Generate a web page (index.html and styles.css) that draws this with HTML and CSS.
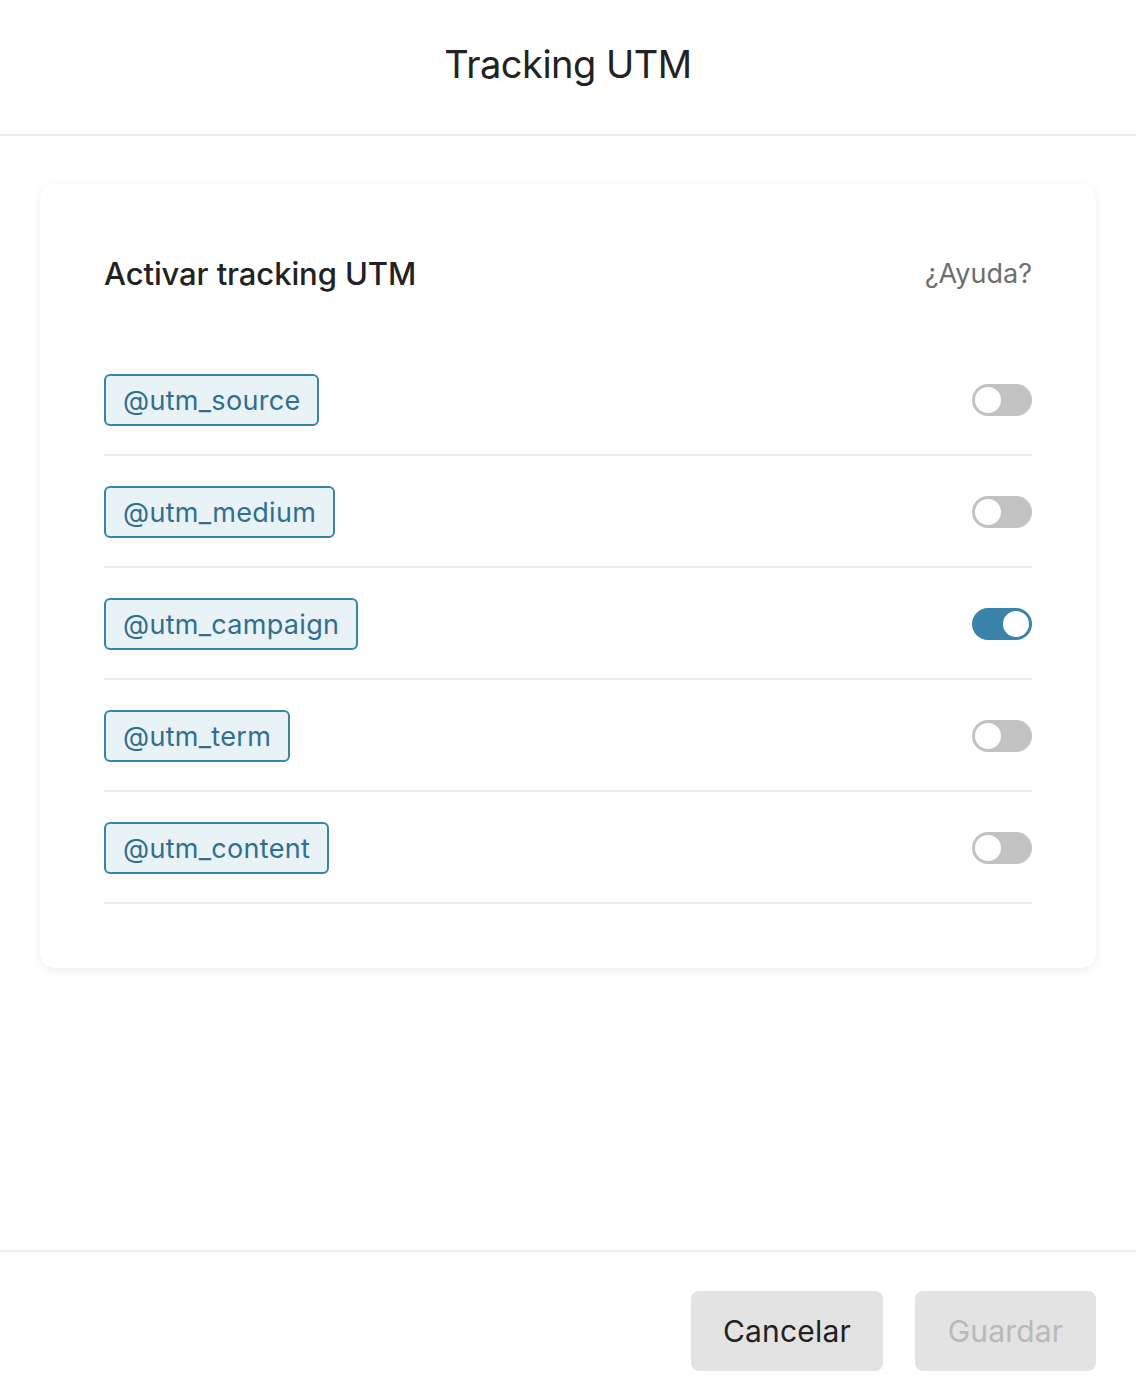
FILE: index.html
```html
<!DOCTYPE html>
<html lang="es">
<head>
<meta charset="utf-8">
<title>Tracking UTM</title>
<link rel="stylesheet" href="styles.css">
</head>
<body>
<div class="page">
  <header class="top">
    <h1 class="title">Tracking UTM</h1>
  </header>
  <main class="content">
    <section class="card">
      <div class="card-head">
        <h2 class="card-title">Activar tracking UTM</h2>
        <a class="help">¿Ayuda?</a>
      </div>
      <ul class="rows">
        <li class="row"><span class="tag">@utm_source</span><span class="toggle"><span class="knob"></span></span></li>
        <li class="row"><span class="tag">@utm_medium</span><span class="toggle"><span class="knob"></span></span></li>
        <li class="row"><span class="tag">@utm_campaign</span><span class="toggle on"><span class="knob"></span></span></li>
        <li class="row"><span class="tag">@utm_term</span><span class="toggle"><span class="knob"></span></span></li>
        <li class="row"><span class="tag">@utm_content</span><span class="toggle"><span class="knob"></span></span></li>
      </ul>
    </section>
  </main>
  <footer class="foot">
    <button class="btn">Cancelar</button>
    <button class="btn disabled">Guardar</button>
  </footer>
</div>
</body>
</html>
```
FILE: styles.css
```css
* { box-sizing: border-box; }
html, body { margin: 0; padding: 0; background: #fff; }
body {
  font-family: Inter, "Noto Sans", "Liberation Sans", sans-serif;
  color: #222;
  width: 1136px;
  height: 1400px;
}
.page {
  display: flex;
  flex-direction: column;
  height: 1400px;
}
.top {
  height: 136px;
  border-bottom: 2px solid #ececec;
  display: flex;
  align-items: center;
  justify-content: center;
}
.title {
  margin: 0 0 6px;
  font-weight: 400;
  font-size: 38px;
  letter-spacing: -0.5px;
  color: #222;
}
.content {
  flex: 1;
  padding: 48px 40px 0;
}
.card {
  background: #fff;
  border-radius: 14px;
  box-shadow: 0 2px 10px rgba(0,0,0,0.07), 0 0 1px rgba(0,0,0,0.05);
  padding: 66px 64px 64px 64px;
}
.card-head {
  display: flex;
  justify-content: space-between;
  align-items: center;
  height: 46px;
  margin-bottom: 48px;
}
.card-title {
  margin: 0;
  font-size: 31px;
  font-weight: 500;
  letter-spacing: -0.1px;
  color: #222;
}
.help {
  font-size: 27px;
  color: #6e6e6e;
  letter-spacing: 0;
}
.rows {
  list-style: none;
  margin: 0;
  padding: 0;
}
.row {
  display: flex;
  align-items: center;
  justify-content: space-between;
  padding: 30px 0 28px;
  border-bottom: 2px solid #ececec;
}
.tag {
  display: inline-flex;
  align-items: center;
  height: 52px;
  padding: 0 17px 0 17px;
  border: 2px solid #3a84aa;
  border-radius: 6px;
  background: #e9f3f7;
  color: #2f6f8f;
  font-size: 27px;
  letter-spacing: 0.3px;
}
.toggle {
  width: 60px;
  height: 32px;
  border-radius: 16px;
  background: #c2c2c2;
  padding: 3px;
  display: flex;
  justify-content: flex-start;
}
.toggle.on {
  background: #3a84aa;
  justify-content: flex-end;
}
.knob {
  width: 26px;
  height: 26px;
  border-radius: 50%;
  background: #fff;
}
.foot {
  height: 150px;
  border-top: 2px solid #ececec;
  display: flex;
  justify-content: flex-end;
  align-items: flex-start;
  gap: 32px;
  padding: 39px 40px 0;
}
.btn {
  font-family: inherit;
  height: 80px;
  border: none;
  border-radius: 8px;
  background: #e3e3e3;
  font-size: 30px;
  letter-spacing: 0.2px;
  color: #222;
  padding: 0 20px;
}
.btn:first-child { width: 192px; }
.btn.disabled { color: #b9b9b9; width: 181px; }
```
